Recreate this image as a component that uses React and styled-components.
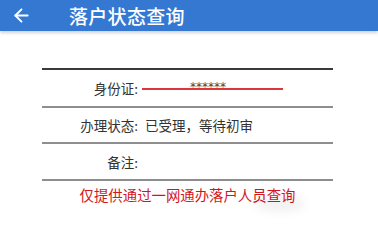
import styled, { createGlobalStyle } from "styled-components";
import { ArrowLeft } from "lucide-react";

const GlobalStyle = createGlobalStyle`
    body {
        margin: 0;
        background: #fff;
        font-family: "Noto Sans CJK SC", "Noto Sans", sans-serif;
    }
`;

const Page = styled.div`
    width: 378px;
    height: 220px;
    overflow: hidden;
    position: relative;
`;

const Header = styled.div`
    height: 31px;
    display: flex;
    align-items: center;
    padding-left: 11px;
    background: #3478d2;
    box-shadow: 0 2px 3px rgba(0, 0, 0, 0.18);
    color: #fff;
`;

const Title = styled.div`
    margin-left: 37px;
    font-size: 19px;
    font-weight: 500;
    line-height: 31px;
    letter-spacing: 0.3px;
`;

const Table = styled.div`
    margin: 37px 0 0 42px;
    width: 291px;
    border-top: 2px solid #3a3a3a;
`;

const Row = styled.div`
    display: grid;
    grid-template-columns: 96px 1fr;
    column-gap: 4px;
    align-items: center;
    height: ${props => props.$h}px;
    border-bottom: 2px solid #8e8e8e;
    font-size: 13.5px;
    color: #333;
`;

const Label = styled.div`
    text-align: right;
`;

const Value = styled.div`
    padding-left: ${props => props.$pad || 0}px;
`;

const Masked = styled.div`
    position: relative;
    width: 141px;
    height: 20px;
    display: flex;
    justify-content: center;
    align-items: flex-start;
    &::after {
        content: "";
        position: absolute;
        left: 0;
        right: 0;
        top: 10px;
        height: 2px;
        background: #d9363e;
    }
`;

const Stars = styled.span`
    font-family: "DejaVu Sans", sans-serif;
    font-size: 12px;
    line-height: 12px;
    color: #444;
    margin: 3px 9px 0 0;
`;

const Notice = styled.div`
    margin: 4px 0 0 42px;
    width: 291px;
    text-align: center;
    color: #d4161c;
    font-size: 14.4px;
    line-height: 20px;
`;

const Smudge = styled.div`
    position: absolute;
    left: 255px;
    top: 196px;
    width: 50px;
    height: 16px;
    border-radius: 50%;
    background: rgba(0, 0, 0, 0.05);
    filter: blur(4px);
`;

const App = () => {
    return (
        <Page>
            <GlobalStyle />
            <Header>
                <ArrowLeft size={21} strokeWidth={2.2} />
                <Title>落户状态查询</Title>
            </Header>
            <Table>
                <Row $h={36}>
                    <Label>身份证:</Label>
                    <Masked>
                        <Stars>******</Stars>
                    </Masked>
                </Row>
                <Row $h={34}>
                    <Label>办理状态:</Label>
                    <Value $pad={3}>已受理，等待初审</Value>
                </Row>
                <Row $h={35}>
                    <Label>备注:</Label>
                    <Value />
                </Row>
            </Table>
            <Notice>仅提供通过一网通办落户人员查询</Notice>
            <Smudge />
        </Page>
    );
};

export default App;
